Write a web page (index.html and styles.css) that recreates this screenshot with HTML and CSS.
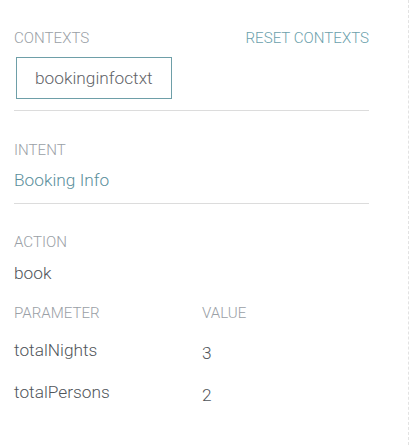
FILE: index.html
```html
<!DOCTYPE html>
<html>
<head>
<meta charset="utf-8">
<link rel="stylesheet" href="styles.css">
</head>
<body>
<div class="panel">
  <section class="section first">
    <div class="head">
      <span class="label">CONTEXTS</span>
      <span class="reset">RESET CONTEXTS</span>
    </div>
    <div class="chip">bookinginfoctxt</div>
  </section>
  <section class="section">
    <div class="label">INTENT</div>
    <div class="intent">Booking Info</div>
  </section>
  <section class="section last">
    <div class="label">ACTION</div>
    <div class="action">book</div>
    <div class="params">
      <div class="label">PARAMETER</div>
      <div class="label">VALUE</div>
      <div class="pname">totalNights</div>
      <div class="pval">3</div>
      <div class="pname">totalPersons</div>
      <div class="pval">2</div>
    </div>
  </section>
</div>
</body>
</html>
```
FILE: styles.css
```css
html, body {
  margin: 0;
  padding: 0;
  background: #fff;
}
body {
  font-family: Roboto, "Liberation Sans", sans-serif;
  font-weight: 300;
}
.panel {
  width: 409px;
  height: 445px;
  box-sizing: border-box;
  border-right: 1px dashed #e2e2e2;
  padding: 0 39px 0 14px;
}
.section {
  border-bottom: 1px solid #dcdcdc;
  padding-top: 29px;
}
.section.first {
  padding-top: 28px;
  padding-bottom: 11px;
}
.section.last {
  border-bottom: none;
  padding-top: 28px;
}
.head {
  display: flex;
  justify-content: space-between;
}
.label {
  font-size: 15.1px;
  line-height: 20px;
  color: #9aa0a6;
}
.reset {
  font-size: 15.1px;
  line-height: 20px;
  color: #6b9fac;
}
.chip {
  display: inline-block;
  margin: 9px 0 0 2px;
  border: 1px solid #6e9fa8;
  padding: 0 18px;
  font-size: 17.3px;
  line-height: 40px;
  color: #5f6368;
}
.intent {
  margin-top: 8px;
  padding-bottom: 11px;
  font-size: 17.3px;
  line-height: 24px;
  color: #5b8f9c;
}
.action {
  margin-top: 9px;
  font-size: 17.3px;
  line-height: 24px;
  color: #50555a;
}
.params {
  margin-top: 18px;
  display: grid;
  grid-template-columns: 188px 1fr;
}
.pname,
.pval {
  font-size: 17.3px;
  line-height: 24px;
  color: #50555a;
  margin-top: 15px;
}
.pname {
  padding-bottom: 3px;
}
.pval {
  padding-top: 3px;
}
```
